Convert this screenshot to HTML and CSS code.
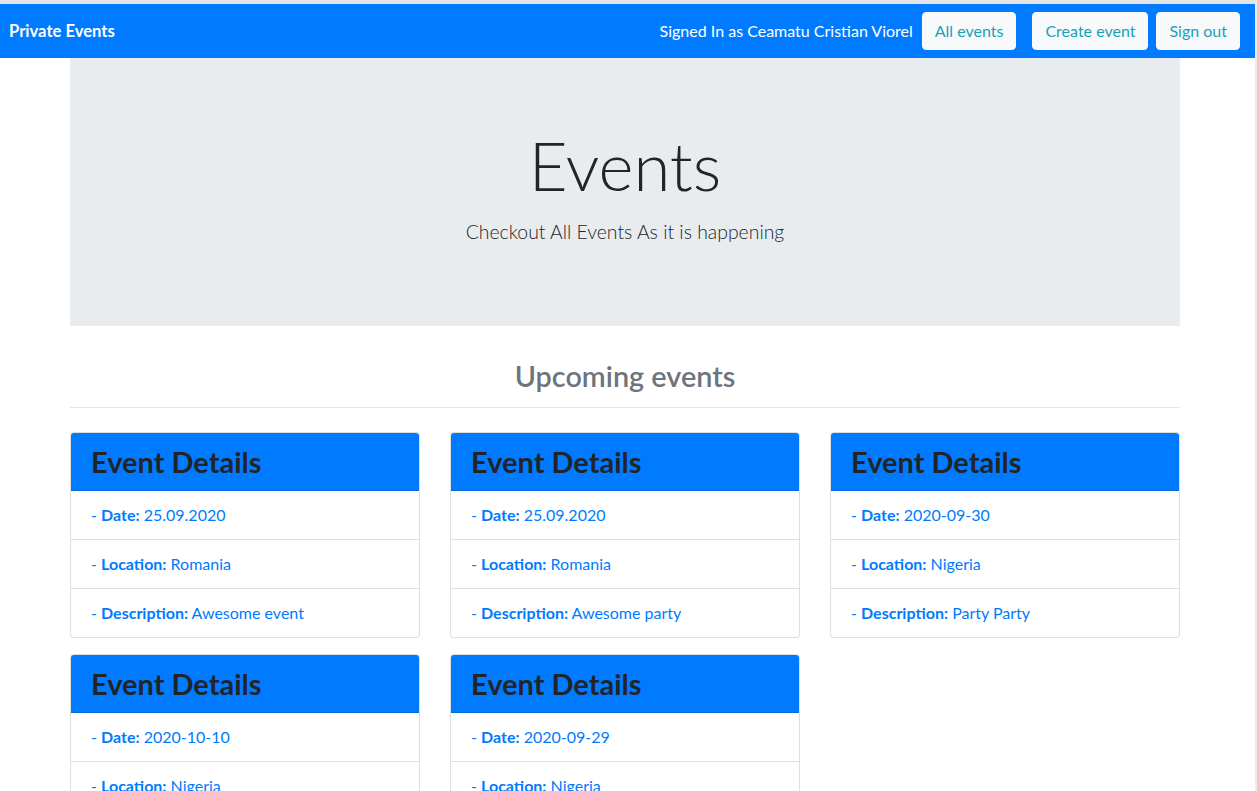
FILE: index.html
```html
<!DOCTYPE html>
<html lang="en">
<head>
<meta charset="utf-8">
<title>Private Events</title>
<link rel="stylesheet" href="styles.css">
</head>
<body>
<div class="page">
  <nav class="navbar">
    <a class="brand" href="#">Private Events</a>
    <div class="nav-right">
      <span class="signed">Signed In as Ceamatu Cristian Viorel</span>
      <a class="btn btn-all" href="#">All events</a>
      <a class="btn btn-create" href="#">Create event</a>
      <a class="btn btn-signout" href="#">Sign out</a>
    </div>
  </nav>

  <main class="container">
    <section class="jumbotron">
      <h1 class="display">Events</h1>
      <p class="lead">Checkout All Events As it is happening</p>
    </section>

    <h3 class="section-title">Upcoming events</h3>

    <div class="cards">
      <div class="card">
        <div class="card-header"><h3>Event Details</h3></div>
        <ul class="list">
          <li>- <b>Date:</b> 25.09.2020</li>
          <li>- <b>Location:</b> Romania</li>
          <li>- <b>Description:</b> Awesome event</li>
        </ul>
      </div>
      <div class="card">
        <div class="card-header"><h3>Event Details</h3></div>
        <ul class="list">
          <li>- <b>Date:</b> 25.09.2020</li>
          <li>- <b>Location:</b> Romania</li>
          <li>- <b>Description:</b> Awesome party</li>
        </ul>
      </div>
      <div class="card">
        <div class="card-header"><h3>Event Details</h3></div>
        <ul class="list">
          <li>- <b>Date:</b> 2020-09-30</li>
          <li>- <b>Location:</b> Nigeria</li>
          <li>- <b>Description:</b> Party Party</li>
        </ul>
      </div>
      <div class="card">
        <div class="card-header"><h3>Event Details</h3></div>
        <ul class="list">
          <li>- <b>Date:</b> 2020-10-10</li>
          <li>- <b>Location:</b> Nigeria</li>
          <li>- <b>Description:</b> Party</li>
        </ul>
      </div>
      <div class="card">
        <div class="card-header"><h3>Event Details</h3></div>
        <ul class="list">
          <li>- <b>Date:</b> 2020-09-29</li>
          <li>- <b>Location:</b> Nigeria</li>
          <li>- <b>Description:</b> Party</li>
        </ul>
      </div>
    </div>
  </main>
</div>
</body>
</html>
```
FILE: styles.css
```css
*, *::before, *::after { box-sizing: border-box; }

html, body { margin: 0; padding: 0; background: #fff; }

body {
  font-family: "Lato", "Roboto", "Liberation Sans", sans-serif;
  font-size: 16px;
  line-height: 1.5;
  color: #212529;
}

.page {
  min-height: 100vh;
  border-top: 4px solid #e4e4e4;
  border-right: 2px solid #ececec;
}

/* Navbar */
.navbar {
  display: flex;
  align-items: center;
  justify-content: space-between;
  height: 54px;
  padding: 0 15px 0 9px;
  background: #007bff;
}

.brand {
  color: #fff;
  font-weight: 700;
  font-size: 16.6px;
  text-decoration: none;
}

.nav-right {
  display: flex;
  align-items: center;
}

.signed {
  color: #fff;
  font-size: 16px;
}

.btn {
  display: inline-block;
  padding: 6px 12px;
  font-size: 16px;
  line-height: 24px;
  color: #17a2b8;
  background: #f8f9fa;
  border: 1px solid #f8f9fa;
  border-radius: 4px;
  text-decoration: none;
}

.btn-all { margin-left: 9px; }
.btn-create { margin-left: 16px; }
.btn-signout { margin-left: 8px; }

/* Main container */
.container {
  width: 1110px;
  margin: 0 0 0 70px;
}

.jumbotron {
  background: #e9ecef;
  padding: 64px 32px;
  margin-bottom: 32px;
  text-align: center;
}

.display {
  margin: 0 0 8px;
  font-size: 67px;
  font-weight: 300;
  line-height: 86px;
  color: #212529;
}

.lead {
  margin: 0 0 16px;
  padding-top: 1px;
  font-size: 19.4px;
  font-weight: 300;
  line-height: 29px;
}

.section-title {
  margin: 0 0 24px;
  padding: 1px 0 14px;
  font-size: 28.8px;
  font-weight: 600;
  line-height: 34px;
  color: #6c757d;
  text-align: center;
  border-bottom: 1px solid #e5e5e5;
}

/* Cards */
.cards {
  display: grid;
  grid-template-columns: repeat(3, 350px);
  column-gap: 30px;
  row-gap: 16px;
  align-items: start;
}

.card {
  border: 1px solid rgba(0, 0, 0, 0.125);
  border-radius: 4px;
  overflow: hidden;
  background: #fff;
}

.card-header {
  background: #007bff;
  padding: 12px 20px;
  border-bottom: 1px solid rgba(0, 0, 0, 0.125);
}

.card-header h3 {
  margin: 0;
  font-size: 29px;
  font-weight: 700;
  line-height: 33px;
  color: #212529;
}

.list {
  list-style: none;
  margin: 0;
  padding: 0;
}

.list li {
  padding: 12px 20px;
  line-height: 24px;
  color: #007bff;
  border-bottom: 1px solid rgba(0, 0, 0, 0.125);
}

.list li:last-child { border-bottom: 0; }

.list b { font-weight: 700; }
```
